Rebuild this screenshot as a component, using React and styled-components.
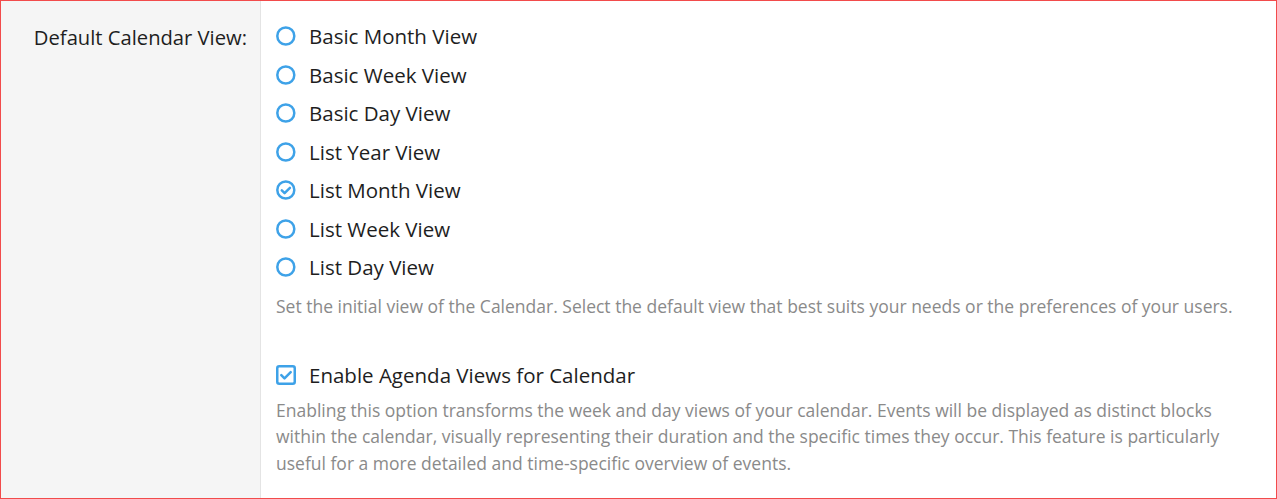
import React from "react";
import styled, { createGlobalStyle } from "styled-components";

const GlobalStyle = createGlobalStyle`
  html, body {
    margin: 0;
    padding: 0;
    background: #fff;
  }
  body {
    font-family: "Open Sans", "Noto Sans", sans-serif;
    color: #1b1b1b;
  }
`;

const VIEWS = [
  { id: "basicMonth", label: "Basic Month View" },
  { id: "basicWeek", label: "Basic Week View" },
  { id: "basicDay", label: "Basic Day View" },
  { id: "listYear", label: "List Year View" },
  { id: "listMonth", label: "List Month View" },
  { id: "listWeek", label: "List Week View" },
  { id: "listDay", label: "List Day View" },
];

const BLUE = "#3ea2e8";

const RadioIcon = ({ checked }) => (
  <svg width="20" height="20" viewBox="0 0 20 20" fill="none">
    <circle cx="9.8" cy="10" r="8.5" stroke={BLUE} strokeWidth="2.5" />
    {checked && (
      <path
        d="M5.8 10.3l2.8 2.8 5.3-5.3"
        stroke={BLUE}
        strokeWidth="2.5"
        strokeLinecap="round"
        strokeLinejoin="round"
      />
    )}
  </svg>
);

const CheckIcon = ({ checked }) => (
  <svg width="20" height="20" viewBox="0 0 20 20" fill="none">
    <rect
      x="1.25"
      y="1.25"
      width="17.5"
      height="17.5"
      rx="2"
      stroke={BLUE}
      strokeWidth="2.5"
    />
    {checked && (
      <path
        d="M5.3 10.2l3.2 3.2 6.2-6.2"
        stroke={BLUE}
        strokeWidth="2.5"
        strokeLinecap="round"
        strokeLinejoin="round"
      />
    )}
  </svg>
);

export default function App() {
  const [view, setView] = React.useState("listMonth");
  const [agenda, setAgenda] = React.useState(true);

  return (
    <>
      <GlobalStyle />
      <Frame>
        <Label>Default Calendar View:</Label>
        <Field>
          <Options>
            {VIEWS.map((v) => (
              <Option key={v.id} onClick={() => setView(v.id)}>
                <IconBox>
                  <RadioIcon checked={view === v.id} />
                </IconBox>
                <OptionText>{v.label}</OptionText>
              </Option>
            ))}
          </Options>
          <Help>
            Set the initial view of the Calendar. Select the default view that
            best suits your needs or the preferences of your users.
          </Help>
          <Option onClick={() => setAgenda(!agenda)} $spaced>
            <IconBox>
              <CheckIcon checked={agenda} />
            </IconBox>
            <OptionText>Enable Agenda Views for Calendar</OptionText>
          </Option>
          <Help $wrapped>
            Enabling this option transforms the week and day views of your
            calendar. Events will be displayed as distinct blocks within the
            calendar, visually representing their duration and the specific
            times they occur. This feature is particularly useful for a more
            detailed and time-specific overview of events.
          </Help>
        </Field>
      </Frame>
    </>
  );
}

const Frame = styled.div`
  box-sizing: border-box;
  width: 1277px;
  height: 499px;
  border: 1px solid #f24b4b;
  display: grid;
  grid-template-columns: 260px 1fr;
  overflow: hidden;
`;

const Label = styled.div`
  background: #f5f5f5;
  border-right: 1px solid #e4e4e4;
  text-align: right;
  padding: 23px 13px 0 0;
  font-size: 20.2px;
  line-height: 27px;
  color: #1e1e1e;
`;

const Field = styled.div`
  padding: 16px 28px 0 15px;
  display: flex;
  flex-direction: column;
`;

const Options = styled.div`
  display: flex;
  flex-direction: column;
`;

const Option = styled.label`
  display: flex;
  align-items: center;
  gap: 13px;
  height: 38.5px;
  cursor: pointer;
  margin-top: ${(p) => (p.$spaced ? "37px" : "0")};
`;

const IconBox = styled.span`
  display: flex;
  width: 20px;
  height: 20px;
`;

const OptionText = styled.span`
  font-size: 20.5px;
  color: #1e1e1e;
`;

const Help = styled.p`
  margin: ${(p) => (p.$wrapped ? "2px 0 0" : "6px 0 0")};
  font-size: 17.5px;
  line-height: 26.5px;
  color: #8a8a8a;
`;
